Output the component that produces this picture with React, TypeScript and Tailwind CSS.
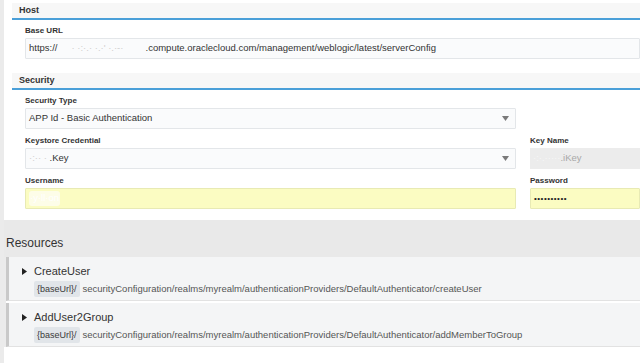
const Arrow = () => (
  <svg width="7" height="5" viewBox="0 0 7 5" className="shrink-0">
    <polygon points="0,0 7,0 3.5,5" fill="#7a7a7a" />
  </svg>
)

const Caret = () => (
  <svg width="5" height="7" viewBox="0 0 5 7" className="shrink-0">
    <polygon points="0,0 5,3.5 0,7" fill="#222" />
  </svg>
)

const Label = ({ children }: { children: React.ReactNode }) => (
  <div className="h-[12px] text-[8px] leading-[10px] font-bold text-[#333]">{children}</div>
)

const SectionHead = ({ title }: { title: string }) => (
  <div className="h-[17px] bg-[#f7f7f7] border-b-2 border-[#4a9fd8] pl-[7px] text-[9px] font-bold leading-[15px] text-[#333]">
    {title}
  </div>
)

const resources = [
  { name: "CreateUser", path: "securityConfiguration/realms/myrealm/authenticationProviders/DefaultAuthenticator/createUser" },
  { name: "AddUser2Group", path: "securityConfiguration/realms/myrealm/authenticationProviders/DefaultAuthenticator/addMemberToGroup" },
]

export default function App() {
  return (
    <div className="w-[640px] h-[363px] overflow-hidden bg-[#ebebeb] flex font-['Liberation_Sans',Arial,sans-serif] text-[#333]">
      <div className="ml-[4px] flex-1 flex flex-col bg-white min-w-0">
        {/* settings panel */}
        <div className="bg-white pt-[3px] pl-[8px] pb-[11px]">
          <SectionHead title="Host" />
          <div className="pl-[13px] pt-[6px]">
            <Label>Base URL</Label>
            <div className="h-[21px] bg-[#fafbfc] border border-[#e3e6e9] rounded-[1px] pl-[3px] flex items-center text-[9.5px] text-[#333] whitespace-nowrap">
              https://
              <span className="inline-block w-[88px] overflow-hidden text-[#cfcfcf] pl-[14px]">·  ·:·.·  ·.·'  ·.·-·</span>
              .compute.oraclecloud.com/management/weblogic/latest/serverConfig
            </div>
          </div>

          <div className="mt-[14px]">
            <SectionHead title="Security" />
          </div>
          <div className="pl-[13px] pt-[6px] flex flex-col gap-[7px]">
            <div className="flex gap-[14px]">
              <div className="w-[491px] shrink-0">
                <Label>Security Type</Label>
                <div className="h-[21px] bg-[#fafbfc] border border-[#e3e6e9] rounded-[1px] pl-[3px] pr-[6px] flex items-center justify-between text-[9.5px] text-[#333]">
                  <span>APP Id - Basic Authentication</span>
                  <Arrow />
                </div>
              </div>
            </div>
            <div className="flex gap-[14px]">
              <div className="w-[491px] shrink-0">
                <Label>Keystore Credential</Label>
                <div className="h-[21px] bg-[#fafbfc] border border-[#e3e6e9] rounded-[1px] pl-[3px] pr-[6px] flex items-center justify-between text-[9.5px] text-[#333]">
                  <span>
                    <span className="text-[#d0d0d0]">·:·· ·  </span>.Key
                  </span>
                  <Arrow />
                </div>
              </div>
              <div className="flex-1 min-w-0">
                <Label>Key Name</Label>
                <div className="h-[21px] bg-[#ececec] pl-[3px] flex items-center text-[9.5px] text-[#a8a8a8] whitespace-nowrap">
                  <span className="text-[#f7f7f7]">·:·.·····  </span>.iKey
                </div>
              </div>
            </div>
            <div className="flex gap-[14px]">
              <div className="w-[491px] shrink-0">
                <Label>Username</Label>
                <div className="h-[21px] bg-[#fbfcc2] border border-[#e8eab4] rounded-[1px] pl-[3px] flex items-center text-[9.5px] text-white">
                  <span className="bg-[#fdfde8] rounded-[3px] px-[1px]">·y·ll·on</span>
                </div>
              </div>
              <div className="flex-1 min-w-0">
                <Label>Password</Label>
                <div className="h-[21px] bg-[#fbfcc2] border border-[#e8eab4] rounded-[1px] pl-[3px] flex items-center text-[8px] text-[#222] tracking-[0.5px]">
                  ••••••••••
                </div>
              </div>
            </div>
          </div>
        </div>

        {/* resources */}
        <div className="h-[37px] bg-[#e9e9e9] pt-[16px] pl-[2px] text-[12px] leading-[14px] text-[#333]">Resources</div>
        <div className="flex flex-col gap-[2px] border-l-2 border-[#ebebeb]">
          {resources.map((r) => (
            <div key={r.name} className="h-[44px] bg-[#f4f5f6] border-l-[3px] border-[#c9c9c9] border-b border-b-[#e2e2e2] pt-[8px]">
              <div className="flex items-center h-[13px] pl-[13px] gap-[7px]">
                <Caret />
                <span className="text-[11px] leading-[13px] text-[#333]">{r.name}</span>
              </div>
              <div className="flex items-center mt-[3px] pl-[25px] gap-[3px] whitespace-nowrap">
                <span className="h-[16px] px-[3px] bg-[#e1e5e9] rounded-[2px] text-[9px] leading-[16px] text-[#3a3a3a]">{"{baseUrl}/"}</span>
                <span className="text-[9.5px] text-[#555]">{r.path}</span>
              </div>
            </div>
          ))}
        </div>
      </div>
    </div>
  )
}
